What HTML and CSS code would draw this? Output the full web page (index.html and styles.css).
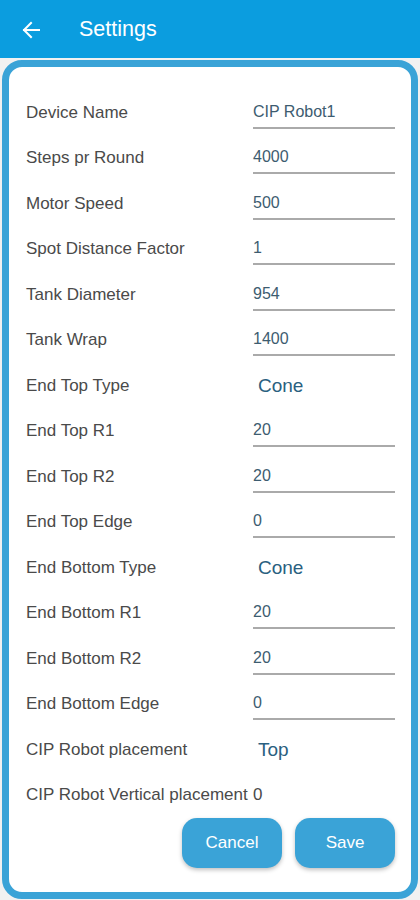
FILE: index.html
```html
<!DOCTYPE html>
<html>
<head>
<meta charset="utf-8">
<link rel="stylesheet" href="styles.css">
</head>
<body>
<header class="appbar">
  <svg class="back" width="20" height="20" viewBox="0 0 20 20"><path d="M18 10H3M10 3L3 10l7 7" fill="none" stroke="#fff" stroke-width="2" stroke-linecap="square"/></svg>
  <h1 class="title">Settings</h1>
</header>
<main class="card">
  <div class="row"><span class="label">Device Name</span><span class="field">CIP Robot1</span></div>
  <div class="row"><span class="label">Steps pr Round</span><span class="field">4000</span></div>
  <div class="row"><span class="label">Motor Speed</span><span class="field">500</span></div>
  <div class="row"><span class="label">Spot Distance Factor</span><span class="field">1</span></div>
  <div class="row"><span class="label">Tank Diameter</span><span class="field">954</span></div>
  <div class="row"><span class="label">Tank Wrap</span><span class="field">1400</span></div>
  <div class="row"><span class="label">End Top Type</span><span class="select">Cone</span></div>
  <div class="row"><span class="label">End Top R1</span><span class="field">20</span></div>
  <div class="row"><span class="label">End Top R2</span><span class="field">20</span></div>
  <div class="row"><span class="label">End Top Edge</span><span class="field">0</span></div>
  <div class="row"><span class="label">End Bottom Type</span><span class="select">Cone</span></div>
  <div class="row"><span class="label">End Bottom R1</span><span class="field">20</span></div>
  <div class="row"><span class="label">End Bottom R2</span><span class="field">20</span></div>
  <div class="row"><span class="label">End Bottom Edge</span><span class="field">0</span></div>
  <div class="row"><span class="label">CIP Robot placement</span><span class="select">Top</span></div>
  <div class="row"><span class="label">CIP Robot Vertical placement</span><span class="plain">0</span></div>
  <div class="actions">
    <button class="btn">Cancel</button>
    <button class="btn">Save</button>
  </div>
</main>
</body>
</html>
```
FILE: styles.css
```css
html, body {
  margin: 0;
  padding: 0;
}
body {
  width: 420px;
  height: 900px;
  background: #f1f1f1;
  font-family: "Liberation Sans", Arial, sans-serif;
  overflow: hidden;
}
.appbar {
  height: 58px;
  background: #0b9ddf;
  display: flex;
  align-items: center;
  padding-left: 21px;
  box-sizing: border-box;
}
.back {
  display: block;
  margin-top: 1px;
}
.title {
  margin: 0 0 0 38px;
  font-size: 21.5px;
  font-weight: normal;
  color: #fff;
}
.card {
  margin: 2px 2px 0 2px;
  height: 839px;
  box-sizing: border-box;
  border: 7px solid #3aa3d7;
  border-radius: 20px;
  background: #fff;
  padding: 23px 0 0 17px;
}
.row {
  display: grid;
  grid-template-columns: 227px 142px;
  height: 45.5px;
  align-items: center;
}
.label {
  font-size: 17px;
  color: #4a4a4a;
  white-space: nowrap;
}
.field {
  height: 32px;
  line-height: 30px;
  box-sizing: border-box;
  border-bottom: 2px solid #aaaaaa;
  font-size: 16px;
  color: #3d5c70;
}
.select {
  padding-left: 5px;
  font-size: 19px;
  color: #2a6080;
}
.plain {
  font-size: 17px;
  color: #4a4a4a;
}
.actions {
  display: flex;
  justify-content: flex-end;
  gap: 13px;
  padding-right: 16px;
}
.btn {
  width: 100px;
  height: 50px;
  border: none;
  border-radius: 15px;
  background: #3aa3d7;
  color: #fff;
  font-family: "Liberation Sans", Arial, sans-serif;
  font-size: 17px;
  box-shadow: 0 2px 4px rgba(0,0,0,0.25);
  padding: 0;
}
```
